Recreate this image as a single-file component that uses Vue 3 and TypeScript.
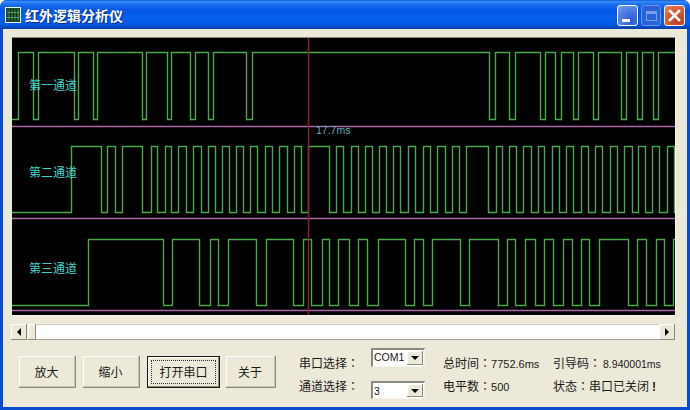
<script setup lang="ts">
const HIGH_LOW: [number, number][] = [[52, 119], [146, 212], [239, 305]]
const edges: number[][] = [
  [18, 33, 38, 74, 78, 93, 97, 142, 146, 167, 171, 190, 195, 208, 213, 246, 252, 489, 495, 509, 515, 540, 545, 555, 561, 573, 578, 593, 598, 621, 626, 637, 642, 653, 658],
  [71, 101, 107, 115, 122, 142, 151, 157, 165, 171, 178, 186, 193, 201, 208, 215, 222, 229, 236, 243, 250, 257, 265, 272, 279, 287, 294, 301, 308, 329, 336, 343, 351, 358, 365, 372, 379, 386, 393, 400, 408, 415, 423, 430, 437, 445, 452, 459, 466, 488, 496, 502, 509, 516, 523, 531, 538, 544, 552, 559, 566, 573, 581, 588, 595, 602, 610, 617, 624, 632, 638, 645, 652, 659, 667, 674],
  [88, 163, 172, 199, 210, 218, 228, 256, 266, 293, 303, 311, 322, 329, 338, 349, 358, 367, 378, 405, 414, 423, 432, 460, 469, 498, 507, 515, 525, 535, 544, 553, 563, 572, 581, 589, 599, 628, 637, 646, 656, 664, 673],
]

function wave(list: number[], high: number, low: number): string {
  const pts: string[] = [`12,${low + 0.5}`]
  let up = true
  for (const x of list) {
    const from = up ? low : high
    const to = up ? high : low
    pts.push(`${x + 0.5},${from + 0.5}`, `${x + 0.5},${to + 0.5}`)
    up = !up
  }
  pts.push(`675,${(up ? low : high) + 0.5}`)
  return pts.join(' ')
}

const waves = edges.map((e, i) => wave(e, HIGH_LOW[i][0], HIGH_LOW[i][1]))
const dividers = [126, 218, 310]
const labels = [
  { text: '第一通道', y: 90 },
  { text: '第二通道', y: 177 },
  { text: '第三通道', y: 273 },
]
const gridX = [4, 7, 10, 13]
</script>

<template>
  <div class="window">
    <header class="titlebar">
      <svg class="app-icon" width="16" height="16" viewBox="0 0 16 16">
        <rect x="0.5" y="0.5" width="15" height="15" fill="#10301c" stroke="#e8f0e8" />
        <rect x="2" y="2" width="12" height="12" fill="#0c2a14" stroke="#3f8f50" stroke-width="0.6" />
        <path v-for="x in gridX" :key="x" :d="`M${x} 3V13`" stroke="#58b868" stroke-width="0.8" />
        <path d="M2 5.5H14M2 10.5H14" stroke="#58b868" stroke-width="0.8" />
      </svg>
      <span class="title">红外逻辑分析仪</span>
      <div class="caption-buttons">
        <button class="cap cap-min"><i></i></button>
        <button class="cap cap-max"><i></i></button>
        <button class="cap cap-close">
          <svg width="15" height="15" viewBox="0 0 15 15"><path d="M3 3L12 12M12 3L3 12" stroke="#fff" stroke-width="2.6" stroke-linecap="square" /></svg>
        </button>
      </div>
    </header>

    <main class="client">
      <div class="scope">
        <svg width="663" height="277" viewBox="12 38 663 277">
          <line v-for="y in dividers" :key="y" x1="12" x2="675" :y1="y + 0.5" :y2="y + 0.5" class="divider" />
          <polyline v-for="(w, i) in waves" :key="i" :points="w" class="wave" />
          <line x1="308.5" x2="308.5" y1="38" y2="315" class="cursor" />
          <text v-for="l in labels" :key="l.text" x="29" :y="l.y" class="channel">{{ l.text }}</text>
          <text x="316" y="134" class="cursor-time">17.7ms</text>
        </svg>
      </div>

      <div class="scrollbar">
        <span class="sb-btn"><b class="arrow-left"></b></span>
        <span class="sb-thumb"></span>
        <span class="sb-track"></span>
        <span class="sb-btn"><b class="arrow-right"></b></span>
      </div>

      <section class="controls">
        <div class="buttons">
          <button class="btn w57">放大</button>
          <button class="btn w57">缩小</button>
          <button class="btn default"><span>打开串口</span></button>
          <button class="btn w50">关于</button>
        </div>

        <div class="form">
          <span class="label r1">串口选择<u>：</u></span>
          <div class="combo"><span class="combo-text">COM1</span><span class="combo-btn"><b></b></span></div>
          <span class="label r1 gap">总时间<u>：</u><em>7752.6ms</em></span>
          <span class="label r1 gap">引导码<u>：</u><em class="lead">8.940001ms</em></span>

          <span class="label r2">通道选择<u>：</u></span>
          <div class="combo second"><span class="combo-text">3</span><span class="combo-btn"><b></b></span></div>
          <span class="label r2 gap">电平数<u>：</u><em>500</em></span>
          <span class="label r2 gap">状态<u>：</u>串口已关闭<strong>!</strong></span>
        </div>
      </section>
    </main>
  </div>
</template>

<style scoped>
.window {
  width: 690px;
  height: 410px;
  display: flex;
  flex-direction: column;
  overflow: hidden;
  background: #0a4cd0;
  border-radius: 7px 7px 0 0;
  font-family: "Noto Sans CJK SC", "Liberation Sans", sans-serif;
}
.titlebar {
  height: 29px;
  flex: none;
  display: flex;
  align-items: center;
  padding: 0 5px;
  box-sizing: border-box;
  background: linear-gradient(180deg, #0a5ad8 0, #3a8cf8 6%, #1a70f0 14%, #0458e6 35%, #0560ee 65%, #0558e0 85%, #0a40a8 100%);
}
.app-icon { flex: none; }
.title {
  margin-left: 4px;
  color: #fff;
  font-size: 14px;
  font-weight: 700;
  line-height: 20px;
  text-shadow: 1px 1px 1px #0a2a88;
}
.caption-buttons {
  margin-left: auto;
  display: flex;
  gap: 3px;
  margin-top: 2px;
}
.cap {
  width: 21px;
  height: 21px;
  padding: 0;
  border: 1px solid #fff;
  border-radius: 3px;
  box-sizing: border-box;
  position: relative;
  display: flex;
  align-items: center;
  justify-content: center;
}
.cap-min {
  background: radial-gradient(circle at 70% 75%, #2a58d8, #5a88ec 70%, #86a8f0);
}
.cap-min i {
  position: absolute;
  left: 4px;
  bottom: 3px;
  width: 8px;
  height: 3px;
  background: #fff;
}
.cap-max {
  width: 20px;
  background: #2a62d8;
  border-color: #6a94ea;
}
.cap-max i {
  width: 11px;
  height: 10px;
  border: 1px solid #7ca0ee;
  border-top-width: 3px;
  box-sizing: border-box;
  display: block;
}
.cap-close {
  background: radial-gradient(circle at 70% 75%, #c03818, #dc6a48 70%, #e8907a);
  border-color: #f4f0f0;
}
.client {
  flex: 1;
  margin: 0 3px 3px;
  padding: 9px 12px 0 8px;
  background: #ece9d8;
  display: flex;
  flex-direction: column;
  min-height: 0;
}
.scope {
  margin-left: 1px;
  width: 663px;
  height: 277px;
  background: #000;
  box-shadow: 0 -1px 0 #8c8a7c, 1px 1px 0 #f8f6ec;
  flex: none;
}
.scope svg { display: block; }
.wave {
  fill: none;
  stroke: #4aa84a;
  stroke-width: 1.4;
}
.divider {
  stroke: #a868a4;
  stroke-width: 1.5;
}
.cursor {
  stroke: #8e2228;
  stroke-width: 1.4;
}
.channel {
  font-size: 12px;
  fill: #3ed4c8;
}
.cursor-time {
  font-family: "Liberation Sans", sans-serif;
  font-size: 10.5px;
  fill: #5ab0bc;
}
.scrollbar {
  margin-top: 9px;
  height: 16px;
  display: flex;
  flex: none;
}
.sb-btn, .sb-thumb {
  display: flex;
  align-items: center;
  justify-content: center;
  background: #ece9d8;
  box-sizing: border-box;
  box-shadow: inset -1px -1px 0 #8c8a7c, inset 1px 1px 0 #fff;
}
.sb-btn { width: 16px; flex: none; }
.sb-thumb { width: 8px; flex: none; margin-left: 1px; }
.sb-track {
  flex: 1;
  background: #fff;
  border-top: 1px solid #d4d0c0;
  border-bottom: 1px solid #aca899;
}
.arrow-left, .arrow-right {
  width: 0;
  height: 0;
  border-top: 4px solid transparent;
  border-bottom: 4px solid transparent;
}
.arrow-left { border-right: 4px solid #000; }
.arrow-right { border-left: 4px solid #000; }
.controls {
  margin-top: 8px;
  display: flex;
  align-items: flex-start;
}
.buttons {
  margin: 8px 0 0 8px;
  display: flex;
  gap: 7px;
}
.btn {
  height: 32px;
  padding: 0 2px 2px 0;
  background: #ece9d8;
  border: none;
  box-sizing: border-box;
  box-shadow: inset -1px -1px 0 #8c8a7c, inset -2px -2px 0 #c8c5b4, inset 1px 1px 0 #fff;
  font-family: inherit;
  font-size: 12px;
  color: #1a1a1a;
}
.w57 { width: 57px; }
.w50 { width: 50px; margin-left: -1px; }
.default {
  width: 73px;
  padding: 3px;
  background: #ece9d8;
  border: 1px solid #1a1a18;
  box-shadow: inset -1px -1px 0 #8c8a7c, inset 1px 1px 0 #fff;
}
.default span {
  display: flex;
  align-items: center;
  justify-content: center;
  height: 100%;
  border: 1px dotted #333;
  box-sizing: border-box;
  padding-bottom: 1px;
}
.form {
  margin-left: 23px;
  display: grid;
  grid-template-columns: 72px 54px 110px auto;
  grid-template-rows: 26px 25px;
  font-size: 12px;
  color: #1a1a1a;
}
.label {
  line-height: 16px;
  white-space: nowrap;
  align-self: start;
}
.label u {
  font-family: "Noto Sans CJK TC", sans-serif;
  text-decoration: none;
}
.gap { margin-left: 18px; }
.r1 { margin-top: 7px; }
.r2 { margin-top: 4px; }
.label em {
  font-family: "Liberation Sans", sans-serif;
  font-style: normal;
  font-size: 11px;
}
.label em.lead { font-size: 10.5px; margin-left: 2px; }
.label strong {
  font-family: "Liberation Sans", sans-serif;
  font-size: 12px;
  font-weight: 700;
  margin-left: 3px;
}
.combo {
  height: 19px;
  width: 54px;
  display: flex;
  background: #fff;
  box-sizing: border-box;
  box-shadow: inset 1px 1px 0 #8c8a7c, inset -1px -1px 0 #f4f2e8, inset 2px 2px 0 #8a887c;
  padding: 2px 2px 2px 3px;
  align-items: flex-end;
}
.combo.second {
  margin-top: 7px;
  height: 18px;
  padding-top: 3px;
}
.combo-text {
  flex: 1;
  align-self: flex-start;
  font-family: "Liberation Sans", sans-serif;
  font-size: 10.5px;
  line-height: 14px;
}
.combo-btn {
  width: 16px;
  height: 14px;
  flex: none;
  background: #ece9d8;
  box-shadow: inset -1px -1px 0 #8c8a7c, inset 1px 1px 0 #fff;
  display: flex;
  align-items: center;
  justify-content: center;
}
.second .combo-btn { height: 13px; }
.combo-btn b {
  width: 0;
  height: 0;
  border-left: 4px solid transparent;
  border-right: 4px solid transparent;
  border-top: 4px solid #000;
}
</style>

<style>
html, body { margin: 0; background: #fff; }
</style>
